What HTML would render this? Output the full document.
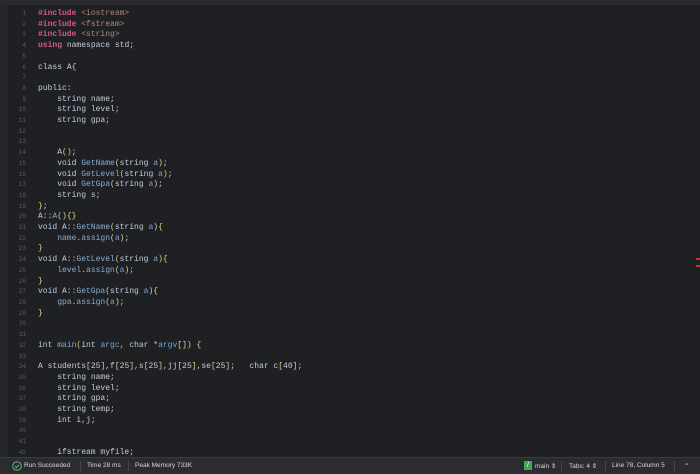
<!DOCTYPE html>
<html><head><meta charset="utf-8"><style>
html,body{margin:0;padding:0;width:700px;height:473px;overflow:hidden;background:#1f2024;}
.top{position:absolute;left:0;top:0;width:700px;height:5px;background:#2a2b2f;}
.gut{position:absolute;left:0;top:5px;width:8px;height:452px;background:#26272b;}
pre{margin:0;position:absolute;top:9px;font-family:"Liberation Mono",monospace;font-size:8px;line-height:10.7px;}
.ln{left:12px;width:14px;text-align:right;color:#5c5e66;font-size:6px;}
.code{left:38px;color:#c9ccd4;}
.p{color:#d9558a;font-weight:bold}.k{color:#c3cbdd}.s{color:#b58676}.f{color:#86aed0}.y{color:#ddd08f}.v{color:#78a9d0}
.st{position:absolute;left:0;top:457px;width:700px;height:16px;background:#2b2c30;border-top:1px solid #3a3b40;font-family:"Liberation Sans",sans-serif;font-size:6.5px;color:#d8d8d8;}
.st span{position:absolute;top:4px;}
.sep{position:absolute;top:3px;width:1px;height:10px;background:#45464b;}
</style></head><body>
<div class="top"></div><div class="gut"></div>
<pre class="ln">1
2
3
4
5
6
7
8
9
10
11
12
13
14
15
16
17
18
19
20
21
22
23
24
25
26
27
28
29
30
31
32
33
34
35
36
37
38
39
40
41
42</pre>
<pre class="code"><span class="p">#include</span> <span class="s">&lt;iostream&gt;</span>
<span class="p">#include</span> <span class="s">&lt;fstream&gt;</span>
<span class="p">#include</span> <span class="s">&lt;string&gt;</span>
<span class="p">using</span> <span class="k">namespace</span> std;

<span class="k">class</span> A<span class="y">{</span>

<span class="k">public:</span>
    <span class="k">string</span> name;
    <span class="k">string</span> level;
    <span class="k">string</span> gpa;


    A<span class="y">()</span>;
    <span class="k">void</span> <span class="f">GetName</span><span class="y">(</span><span class="k">string</span> <span class="v">a</span><span class="y">)</span>;
    <span class="k">void</span> <span class="f">GetLevel</span><span class="y">(</span><span class="k">string</span> <span class="v">a</span><span class="y">)</span>;
    <span class="k">void</span> <span class="f">GetGpa</span><span class="y">(</span><span class="k">string</span> <span class="v">a</span><span class="y">)</span>;
    <span class="k">string</span> s;
<span class="y">}</span>;
A::<span class="f">A</span><span class="y">(){}</span>
<span class="k">void</span> A::<span class="f">GetName</span><span class="y">(</span><span class="k">string</span> <span class="v">a</span><span class="y">){</span>
    <span class="f">name</span>.<span class="f">assign</span><span class="y">(</span><span class="v">a</span><span class="y">)</span>;
<span class="y">}</span>
<span class="k">void</span> A::<span class="f">GetLevel</span><span class="y">(</span><span class="k">string</span> <span class="v">a</span><span class="y">){</span>
    <span class="f">level</span>.<span class="f">assign</span><span class="y">(</span><span class="v">a</span><span class="y">)</span>;
<span class="y">}</span>
<span class="k">void</span> A::<span class="f">GetGpa</span><span class="y">(</span><span class="k">string</span> <span class="v">a</span><span class="y">){</span>
    <span class="f">gpa</span>.<span class="f">assign</span><span class="y">(</span><span class="v">a</span><span class="y">)</span>;
<span class="y">}</span>


<span class="k">int</span> <span class="f">main</span><span class="y">(</span><span class="k">int</span> <span class="v">argc</span>, <span class="k">char</span> *<span class="v">argv</span><span class="y">[])</span> <span class="y">{</span>

A students<span class="y">[</span>25<span class="y">]</span>,f<span class="y">[</span>25<span class="y">]</span>,s<span class="y">[</span>25<span class="y">]</span>,jj<span class="y">[</span>25<span class="y">]</span>,se<span class="y">[</span>25<span class="y">]</span>;   <span class="k">char</span> c<span class="y">[</span>40<span class="y">]</span>;
    <span class="k">string</span> name;
    <span class="k">string</span> level;
    <span class="k">string</span> gpa;
    <span class="k">string</span> temp;
    <span class="k">int</span> i,j;


    <span class="k">ifstream</span> myfile;</pre>
<div style="position:absolute;left:696px;top:258px;width:4px;height:9px;border-top:2px solid #c0392b;border-bottom:2px solid #c0392b;box-sizing:border-box"></div>
<div class="st">
<svg style="position:absolute;left:12px;top:3px" width="10" height="10"><circle cx="5" cy="5" r="4.3" fill="none" stroke="#56c26a" stroke-width="1"/><path d="M3 5.2l1.4 1.4L7 3.8" fill="none" stroke="#56c26a" stroke-width="1"/></svg>
<span style="left:24px">Run Succeeded</span>
<div class="sep" style="left:80px"></div>
<span style="left:87px">Time 28 ms</span>
<div class="sep" style="left:128px"></div>
<span style="left:135px">Peak Memory 733K</span>
<div style="position:absolute;left:524px;top:3px;width:8px;height:9px;background:#3fa84a;color:#fff;font-size:7px;line-height:9px;text-align:center">/</div>
<span style="left:535px">main ⇕</span>
<div class="sep" style="left:561px"></div>
<span style="left:569px">Tabs: 4 ⇕</span>
<div class="sep" style="left:605px"></div>
<span style="left:612px">Line 78, Column 5</span>
<div class="sep" style="left:674px"></div>
<span style="left:684px">⌃</span>
</div>
</body></html>
